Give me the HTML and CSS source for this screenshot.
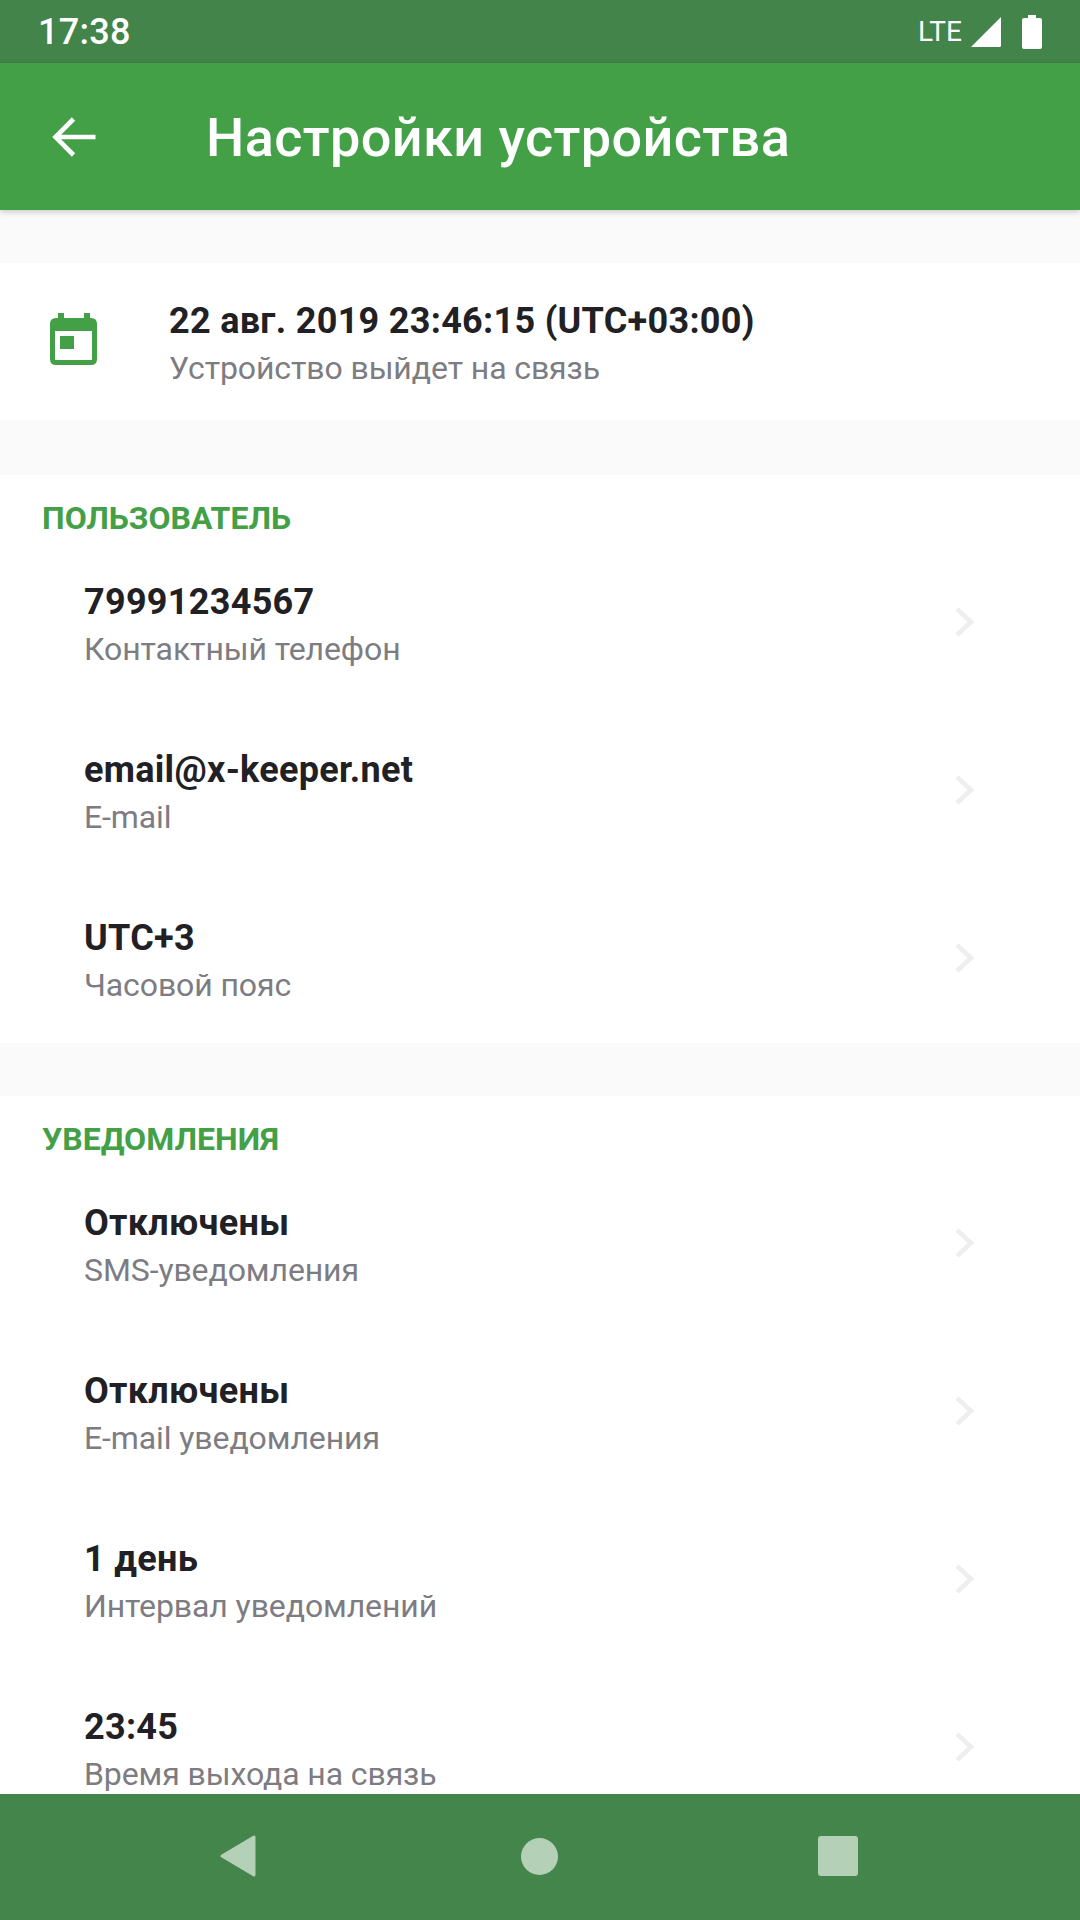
FILE: index.html
```html
<!DOCTYPE html>
<html lang="ru">
<head>
<meta charset="utf-8">
<title>Настройки устройства</title>
<link rel="stylesheet" href="styles.css">
</head>
<body>
<div class="screen">
  <header class="status">
    <span class="clock">17:38</span>
    <div class="status-icons">
      <span class="lte">LTE</span>
      <svg class="signal" width="32" height="32" viewBox="0 0 32 32"><path d="M1 31 L31 1 V29.5 Q31 31 29.5 31 Z" fill="#fff"/></svg>
      <svg class="battery" width="20" height="34" viewBox="0 0 20 34"><path d="M6 0H14V3H18Q20 3 20 5V32Q20 34 18 34H2Q0 34 0 32V5Q0 3 2 3H6Z" fill="#fff"/></svg>
    </div>
  </header>
  <div class="appbar">
    <svg class="back" width="44" height="40" viewBox="0 0 44 40"><path d="M21.5 2 L3.5 20 L21.5 38 M3.5 20 H43.5" fill="none" stroke="#fff" stroke-width="4.6"/></svg>
    <h1 class="title">Настройки устройства</h1>
  </div>
  <main class="content">
    <section class="card next-contact">
      <svg class="calendar" width="47" height="52" viewBox="0 0 47 52"><path fill-rule="evenodd" d="M8 0H14V5H34V0H40V5H41Q47 5 47 11V46Q47 52 41 52H6Q0 52 0 46V11Q0 5 6 5H8ZM5 18V47H42V18ZM10 23H24V36H10Z" fill="#43A047"/></svg>
      <div class="text">
        <div class="value">22 авг. 2019 23:46:15 (UTC+03:00)</div>
        <div class="label">Устройство выйдет на связь</div>
      </div>
    </section>
    <section class="card group">
      <h2 class="group-title">ПОЛЬЗОВАТЕЛЬ</h2>
      <div class="row"><div class="text"><div class="value">79991234567</div><div class="label">Контактный телефон</div></div><svg class="chevron" width="20" height="30" viewBox="0 0 20 30"><path d="M2 2 L16 15 L2 28" fill="none" stroke="#eeeef0" stroke-width="4.5"/></svg></div>
      <div class="row"><div class="text"><div class="value">email@x-keeper.net</div><div class="label">E-mail</div></div><svg class="chevron" width="20" height="30" viewBox="0 0 20 30"><path d="M2 2 L16 15 L2 28" fill="none" stroke="#eeeef0" stroke-width="4.5"/></svg></div>
      <div class="row"><div class="text"><div class="value">UTC+3</div><div class="label">Часовой пояс</div></div><svg class="chevron" width="20" height="30" viewBox="0 0 20 30"><path d="M2 2 L16 15 L2 28" fill="none" stroke="#eeeef0" stroke-width="4.5"/></svg></div>
    </section>
    <section class="card group">
      <h2 class="group-title">УВЕДОМЛЕНИЯ</h2>
      <div class="row"><div class="text"><div class="value">Отключены</div><div class="label">SMS-уведомления</div></div><svg class="chevron" width="20" height="30" viewBox="0 0 20 30"><path d="M2 2 L16 15 L2 28" fill="none" stroke="#eeeef0" stroke-width="4.5"/></svg></div>
      <div class="row"><div class="text"><div class="value">Отключены</div><div class="label">E-mail уведомления</div></div><svg class="chevron" width="20" height="30" viewBox="0 0 20 30"><path d="M2 2 L16 15 L2 28" fill="none" stroke="#eeeef0" stroke-width="4.5"/></svg></div>
      <div class="row"><div class="text"><div class="value">1 день</div><div class="label">Интервал уведомлений</div></div><svg class="chevron" width="20" height="30" viewBox="0 0 20 30"><path d="M2 2 L16 15 L2 28" fill="none" stroke="#eeeef0" stroke-width="4.5"/></svg></div>
      <div class="row"><div class="text"><div class="value">23:45</div><div class="label">Время выхода на связь</div></div><svg class="chevron" width="20" height="30" viewBox="0 0 20 30"><path d="M2 2 L16 15 L2 28" fill="none" stroke="#eeeef0" stroke-width="4.5"/></svg></div>
    </section>
  </main>
  <nav class="navbar">
    <svg width="40" height="44" viewBox="0 0 40 44"><path d="M36 3 V41 L4 22 Z" fill="#b4d0b7" stroke="#b4d0b7" stroke-width="3" stroke-linejoin="round"/></svg>
    <span class="nav-home"></span>
    <span class="nav-recent"></span>
  </nav>
</div>
</body>
</html>
```
FILE: styles.css
```css
* { box-sizing: border-box; }
html, body { margin: 0; padding: 0; }
body { font-family: Roboto, "Noto Sans", sans-serif; background: #fafafa; }
.screen { width: 1080px; height: 1920px; display: flex; flex-direction: column; overflow: hidden; }
.status { height: 63px; flex: none; background: #43844a; color: #fff; display: flex; align-items: center; justify-content: space-between; padding: 0 38px; }
.clock { font-size: 36px; font-weight: 500; letter-spacing: .3px; }
.status-icons { display: flex; align-items: center; }
.lte { font-size: 28px; margin-right: 8px; }
.battery { margin-left: 20px; }
.appbar { height: 147px; flex: none; background: #43a047; display: flex; align-items: center; padding-left: 52px; box-shadow: 0 2px 6px rgba(0,0,0,.2); position: relative; }
.back { flex: none; }
.title { margin: 2px 0 0 110px; font-size: 54px; font-weight: 500; color: #fff; letter-spacing: .4px; }
.content { flex: 1; min-height: 0; overflow: hidden; padding-top: 53px; display: flex; flex-direction: column; gap: 53px; }
.card { background: #fff; flex: none; }
.next-contact { height: 157px; margin-bottom: 2px; display: flex; align-items: center; padding-left: 50px; gap: 72px; }
.next-contact .text { margin-top: 6px; }
.calendar { flex: none; margin-bottom: 6px; }
.value { font-size: 36px; font-weight: 700; line-height: 48px; color: #212125; letter-spacing: .3px; }
.label { font-size: 32px; line-height: 47px; color: #7d7c82; letter-spacing: -.1px; }
.group { display: flex; flex-direction: column; gap: 16px; padding-bottom: 6px; }
.group-title { margin: 0 0 -16px; font-size: 32px; font-weight: 700; color: #43a047; padding: 25px 0 0 42px; line-height: 36px; height: 74px; }
.row { height: 152px; display: flex; align-items: center; justify-content: space-between; padding: 0 105px 0 84px; }
.row .text { margin-top: 1px; }
.chevron { flex: none; margin-top: -6px; }
.navbar { height: 126px; flex: none; background: #43854a; display: flex; align-items: center; padding-left: 218px; padding-bottom: 2px; }
.nav-home { width: 37px; height: 37px; border-radius: 50%; background: #b4d0b7; margin-left: 263px; }
.nav-recent { width: 40px; height: 40px; border-radius: 3px; background: #b4d0b7; margin-left: 260px; }
```
